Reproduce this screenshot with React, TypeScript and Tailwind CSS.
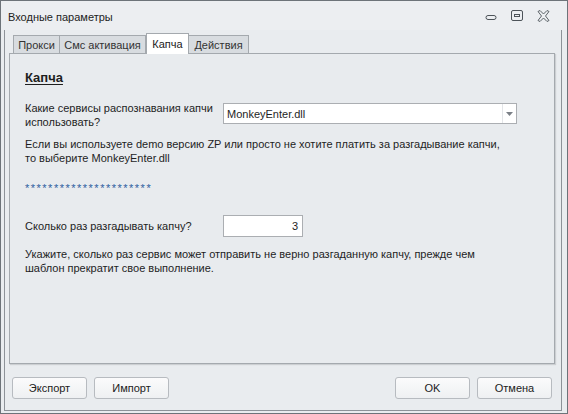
import React from "react";

const TABS = [
  { id: "proxy", label: "Прокси", w: "w-[47px]" },
  { id: "sms", label: "Смс активация", w: "w-[87px]" },
  { id: "captcha", label: "Капча", w: "w-[43px]" },
  { id: "actions", label: "Действия", w: "w-[61px]" },
];

function WinButtons() {
  return (
    <div className="flex items-center gap-[14px] pr-[17px] text-[#4d5359]">
      <svg width="12" height="12" viewBox="0 0 12 12">
        <rect x="1" y="5.5" width="10" height="4" rx="2" fill="none" stroke="currentColor" strokeWidth="1" />
      </svg>
      <svg width="12" height="12" viewBox="0 0 12 12">
        <rect x="0.5" y="0.5" width="11" height="10" rx="1.5" fill="none" stroke="currentColor" strokeWidth="1" />
        <rect x="3.5" y="4.5" width="5" height="2" fill="none" stroke="currentColor" strokeWidth="1" />
      </svg>
      <svg width="13" height="12" viewBox="0 0 13 12">
        <path
          d="M1 1.5 L3 0.5 L6.5 4 L10 0.5 L12 1.5 L8.5 6 L12 10.5 L10 11.5 L6.5 8 L3 11.5 L1 10.5 L4.5 6 Z"
          fill="none"
          stroke="currentColor"
          strokeWidth="0.9"
          strokeLinejoin="round"
        />
      </svg>
    </div>
  );
}

function Btn({ children }: { children: React.ReactNode }) {
  return (
    <button className="flex h-[22px] w-[75px] items-center justify-center rounded-[3px] border border-[#b7bbc0] bg-gradient-to-b from-[#fbfbfc] to-[#eef0f2] text-[11px] text-[#222]">
      {children}
    </button>
  );
}

export default function App() {
  return (
    <div
      className="flex h-[414px] w-[568px] flex-col border border-[#6d7379] bg-[#e9ecef] text-[11px] leading-[14px] text-[#1e1e1e]"
      style={{ fontFamily: '"Liberation Sans", Arial, sans-serif' }}
    >
      {/* Title bar */}
      <div className="flex h-[29px] shrink-0 items-center justify-between bg-[#eceef1]">
        <span className="pl-[7px] pt-[3px] text-[11px] text-[#222]">Входные параметры</span>
        <WinButtons />
      </div>

      {/* Client area */}
      <div className="mb-[2px] ml-[3px] mr-[5px] flex flex-1 flex-col border-x border-b border-[#8d9298] px-[4px]">
        {/* Tabs */}
        <div className="flex h-[23px] items-end pl-[4px] pt-[3px]">
          {TABS.map((t) => {
            const active = t.id === "captcha";
            return (
              <div
                key={t.id}
                className={
                  active
                    ? `${t.w} relative z-10 -mb-px flex h-[21px] items-start justify-center whitespace-nowrap border-x border-t border-[#a4a9ae] bg-white pt-[3px] text-[#222]`
                    : `${t.w} -ml-px flex h-[18px] items-center justify-center whitespace-nowrap border border-b-0 border-[#a4a9ae] bg-[#d8dce0] pt-[1px] first:ml-0 text-[#333]`
                }
              >
                {t.label}
              </div>
            );
          })}
        </div>

        {/* Panel */}
        <div className="flex h-[311px] w-[546px] flex-col border border-[#a4a9ae] bg-[#e8ebee] px-[15px] shadow-[1px_1px_1px_rgba(0,0,0,0.12)]">
          <div className="mt-[16px] text-[13px] font-bold leading-[16px] underline underline-offset-2">Капча</div>

          <div className="mt-[15px] flex items-start">
            <div className="w-[198px] whitespace-nowrap">
              Какие сервисы распознавания капчи
              <br />
              использовать?
            </div>
            <div className="mt-[2px] flex h-[21px] w-[294px] items-center border border-[#abaeb2] bg-white">
              <span className="flex-1 pl-[3px]">MonkeyEnter.dll</span>
              <span className="flex h-full w-[14px] items-center justify-center border-l border-[#e3e5e8]">
                <svg width="7" height="4" viewBox="0 0 7 4">
                  <path d="M0 0 H7 L3.5 4 Z" fill="#7b8087" />
                </svg>
              </span>
            </div>
          </div>

          <p className="mt-[8px] whitespace-nowrap">
            Если вы используете demo версию ZP или просто не хотите платить за разгадывание капчи,
            <br />
            то выберите MonkeyEnter.dll
          </p>

          <div className="mt-[16px] tracking-[1.5px] text-[#2e5e9e]">**********************</div>

          <div className="mt-[20px] flex items-center">
            <div className="w-[198px] whitespace-nowrap">Сколько раз разгадывать капчу?</div>
            <div className="flex h-[22px] w-[80px] items-center justify-end border border-[#abaeb2] bg-white pr-[4px]">3</div>
          </div>

          <p className="mt-[10px] whitespace-nowrap">
            Укажите, сколько раз сервис может отправить не верно разгаданную капчу, прежде чем
            <br />
            шаблон прекратит свое выполнение.
          </p>
        </div>

        {/* Buttons */}
        <div className="mt-[13px] flex items-center">
          <div className="flex gap-[7px] pl-[3px]">
            <Btn>Экспорт</Btn>
            <Btn>Импорт</Btn>
          </div>
          <div className="ml-auto flex gap-[7px] pr-[5px]">
            <Btn>OK</Btn>
            <Btn>Отмена</Btn>
          </div>
        </div>
      </div>
    </div>
  );
}
